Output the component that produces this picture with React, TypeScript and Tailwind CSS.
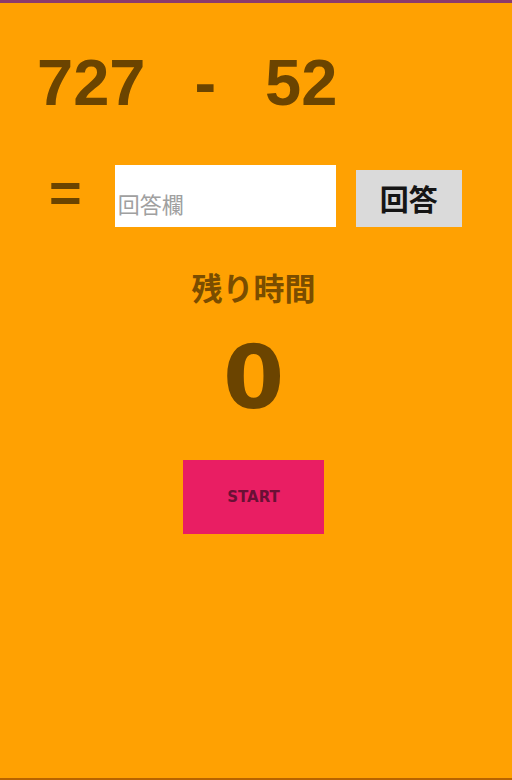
const sans = "font-['Liberation_Sans','Noto_Sans_CJK_JP',sans-serif]";
const heavy = "font-['DejaVu_Sans','Liberation_Sans',sans-serif]";
const cjk = "font-['Noto_Sans_CJK_JP','Liberation_Sans',sans-serif]";

export default function App() {
  return (
    <div className={`flex h-[780px] w-[512px] flex-col overflow-hidden border-t-[3px] border-b-2 border-t-[#8c3b6c] border-b-[#b86400] bg-[#ffa102] ${sans}`}>
      {/* 問題 */}
      <div className="mt-[47px] flex items-center gap-[49px] pl-[37px] text-[65px] font-bold leading-none text-[#6b4400]">
        <span>727</span>
        <span>-</span>
        <span>52</span>
      </div>

      {/* 回答欄 */}
      <div className="mt-[50px] flex items-end">
        <span className="mb-[6px] ml-[49px] text-[56px] font-bold leading-none text-[#6b4400]">=</span>
        <input
          placeholder="回答欄"
          className={`ml-[33px] h-[62px] w-[221px] bg-white px-[3px] pt-[14px] text-[22px] text-[#333] outline-none placeholder:text-[#a0a0a0] ${cjk}`}
        />
        <button
          type="button"
          className={`ml-[20px] h-[57px] w-[106px] bg-[#dadada] text-[29px] font-bold text-[#151515] ${cjk}`}
        >
          回答
        </button>
      </div>

      {/* 残り時間 */}
      <div className="mt-[44px] flex flex-col items-center pr-[5px]">
        <p className={`text-[31px] font-bold leading-none text-[#7a4d00] ${cjk}`}>残り時間</p>
        <p className={`mt-[32px] text-[88px] font-bold leading-none text-[#6b4400] ${heavy}`}>0</p>
        <button
          type="button"
          className={`mt-[38px] h-[74px] w-[141px] bg-[#e91e63] text-[15px] font-bold text-[#6a1035] ${heavy}`}
        >
          START
        </button>
      </div>
    </div>
  );
}
